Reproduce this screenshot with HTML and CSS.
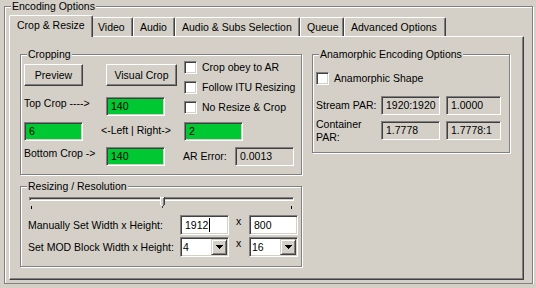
FILE: index.html
```html
<!DOCTYPE html>
<html lang="en">
<head>
    <meta charset="UTF-8">
    <title>Encoding Options</title>
    <link rel="stylesheet" href="styles.css">
</head>
<body>

    <div class="group outer">
        <span class="group-title">Encoding Options</span>

        <div class="tabs">
            <div class="tab tab-active">Crop &amp; Resize</div>
            <div class="tab tab-video">Video</div>
            <div class="tab tab-audio">Audio</div>
            <div class="tab tab-subs">Audio &amp; Subs Selection</div>
            <div class="tab tab-queue">Queue</div>
            <div class="tab tab-advanced">Advanced Options</div>
        </div>

        <div class="tab-panel">

            <div class="group cropping">
                <span class="group-title">Cropping</span>
                <div class="crop-grid">
                    <button class="btn btn-preview">Preview</button>
                    <button class="btn btn-visual">Visual Crop</button>
                    <div class="check-list">
                        <label class="check"><span class="check-box"></span>Crop obey to AR</label>
                        <label class="check"><span class="check-box"></span>Follow ITU Resizing</label>
                        <label class="check"><span class="check-box"></span>No Resize &amp; Crop</label>
                    </div>

                    <span class="label">Top Crop ----&gt;</span>
                    <span class="field field-green">140</span>

                    <span class="field field-green">6</span>
                    <span class="label label-mid">&lt;-Left | Right-&gt;</span>
                    <span class="field field-green">2</span>

                    <span class="label">Bottom Crop -&gt;</span>
                    <span class="field field-green">140</span>
                    <div class="ar-error">
                        <span class="label">AR Error:</span>
                        <span class="field ar-field">0.0013</span>
                    </div>
                </div>
            </div>

            <div class="group anamorphic">
                <span class="group-title">Anamorphic Encoding Options</span>
                <label class="check"><span class="check-box"></span>Anamorphic Shape</label>
                <div class="par-grid">
                    <span class="label">Stream PAR:</span>
                    <span class="field field-par">1920:1920</span>
                    <span class="field field-par-narrow">1.0000</span>
                    <span class="label">Container<br>PAR:</span>
                    <span class="field field-par">1.7778</span>
                    <span class="field field-par-narrow">1.7778:1</span>
                </div>
            </div>

            <div class="group resizing">
                <span class="group-title">Resizing / Resolution</span>
                <div class="slider">
                    <div class="slider-track"></div>
                    <svg class="slider-thumb" style="left: 50%" width="5" height="11" viewBox="0 0 5 11">
                        <rect x="0" y="0" width="5" height="8" fill="#d4d0c8"/>
                        <rect x="0" y="0" width="1" height="8" fill="#fff"/>
                        <rect x="0" y="0" width="4" height="1" fill="#fff"/>
                        <rect x="3" y="1" width="1" height="8" fill="#808080"/>
                        <rect x="4" y="0" width="1" height="8" fill="#404040"/>
                        <rect x="1" y="8" width="1" height="1" fill="#fff"/>
                        <rect x="2" y="8" width="1" height="1" fill="#d4d0c8"/>
                        <rect x="3" y="8" width="1" height="1" fill="#404040"/>
                        <rect x="2" y="9" width="1" height="2" fill="#404040"/>
                    </svg>
                    <div class="slider-ticks"><i></i><i></i></div>
                </div>

                <div class="size-grid">
                    <span class="label">Manually Set Width x Height:</span>
                    <span class="field field-white">1912<span class="caret"></span></span>
                    <span class="times">x</span>
                    <span class="field field-white">800</span>

                    <span class="label">Set MOD Block Width x Height:</span>
                    <div class="combo">
                        <span>4</span>
                        <span class="combo-btn"><svg width="7" height="4" viewBox="0 0 7 4"><path d="M0 0H7V1H6V2H5V3H4V4H3V3H2V2H1V1H0Z"/></svg></span>
                    </div>
                    <span class="times">x</span>
                    <div class="combo">
                        <span>16</span>
                        <span class="combo-btn"><svg width="7" height="4" viewBox="0 0 7 4"><path d="M0 0H7V1H6V2H5V3H4V4H3V3H2V2H1V1H0Z"/></svg></span>
                    </div>
                </div>
            </div>

        </div>
    </div>

</body>
</html>
```

FILE: styles.css
```css
body {
    margin: 0;
    background-color: #d4d0c8;
    font-family: "Liberation Sans", Arial, sans-serif;
    font-size: 10.5px;
    line-height: 13px;
    color: #000;
}

/* etched group box */
.group {
    position: relative;
    box-sizing: border-box;
    border: 1px solid #808080;
    box-shadow: inset 1px 1px 0 #fff, 1px 1px 0 #fff;
}

.group-title {
    position: absolute;
    top: -7px;
    left: 6px;
    padding: 0 1px;
    background-color: #d4d0c8;
    white-space: nowrap;
}

.outer {
    width: 529px;
    height: 278px;
    margin: 6px 0 0 4px;
    padding: 8px 0 0 4px;
}

/* tabs */
.tabs {
    display: flex;
    align-items: flex-end;
    height: 21px;
    margin-left: 2px;
}

.tab {
    box-sizing: border-box;
    height: 19px;
    padding: 3px 0 0 6px;
    border: 1px solid;
    border-color: #fff #404040 transparent #fff;
    border-bottom: 0;
    border-radius: 2px 2px 0 0;
    box-shadow: inset -1px 0 0 #808080;
    white-space: nowrap;
}

.tab-active {
    position: relative;
    z-index: 1;
    width: 84px;
    height: 22px;
    margin: 0 -2px -1px;
    padding-left: 7px;
    background-color: #d4d0c8;
}

.tab-video { width: 42px; }
.tab-audio { width: 42px; }
.tab-subs { width: 125px; }
.tab-queue { width: 44px; }
.tab-advanced { width: 102px; }

.tab-panel {
    box-sizing: border-box;
    display: grid;
    grid-template-columns: 282px 198px;
    grid-template-rows: 121px 81px;
    column-gap: 10px;
    row-gap: 11px;
    align-items: start;
    width: 515px;
    height: 244px;
    padding: 17px 0 0 10px;
    border: 1px solid;
    border-color: #fff #404040 #404040 #fff;
    box-shadow: inset -1px -1px 0 #808080;
}

/* cropping */
.cropping {
    height: 121px;
    padding: 9px 0 0 3px;
}

.crop-grid {
    display: grid;
    grid-template-columns: 82px 78px 1fr;
    grid-template-rows: 33px 25px 25px 19px;
    align-items: start;
}

.btn {
    box-sizing: border-box;
    height: 22px;
    padding: 0;
    font: inherit;
    color: #000;
    background-color: #d4d0c8;
    border: 1px solid;
    border-color: #fff #404040 #404040 #fff;
    box-shadow: inset -1px -1px 0 #808080;
}

.btn-preview { width: 59px; }
.btn-visual { width: 71px; }

.check-list {
    grid-row: span 2;
    display: flex;
    flex-direction: column;
    gap: 7px;
    margin-top: -3px;
}

.check {
    display: flex;
    align-items: center;
    gap: 5px;
    height: 13px;
    white-space: nowrap;
}

.check-box {
    box-sizing: border-box;
    width: 13px;
    height: 13px;
    flex: none;
    background-color: #fff;
    border: 1px solid;
    border-color: #808080 #fff #fff #808080;
    box-shadow: inset 1px 1px 0 #404040, inset -1px -1px 0 #d4d0c8;
}

.label {
    white-space: nowrap;
}

.label-mid {
    margin: 2px 0 0 -5px;
}

.field {
    box-sizing: border-box;
    display: block;
    height: 19px;
    line-height: 17px;
    padding-left: 4px;
    background-color: #d4d0c8;
    border: 1px solid;
    border-color: #808080 #fff #fff #808080;
    box-shadow: inset 1px 1px 0 #404040, inset -1px -1px 0 #d4d0c8;
    white-space: nowrap;
    overflow: hidden;
}

.field-green {
    width: 59px;
    background-color: #00c832;
}

.ar-error {
    display: flex;
    align-items: center;
    justify-content: space-between;
    width: 111px;
    height: 19px;
    margin-left: -1px;
}

.ar-field {
    width: 59px;
}

/* anamorphic */
.anamorphic {
    height: 99px;
    padding: 17px 0 0 3px;
}

.par-grid {
    display: grid;
    grid-template-columns: 65px 65px 55px;
    grid-template-rows: 19px 19px;
    row-gap: 6px;
    align-items: center;
    margin-top: 11px;
}

.field-par { width: 59px; }
.field-par-narrow { width: 55px; }

/* resizing */
.resizing {
    height: 81px;
    padding-left: 3px;
}

.slider {
    position: relative;
    width: 265px;
    margin: 10px 0 0 5px;
}

.slider-track {
    box-sizing: border-box;
    height: 4px;
    margin-top: 4px;
    border: 1px solid;
    border-color: #808080 #fff #fff #808080;
    box-shadow: inset 1px 1px 0 #404040;
}

.slider-thumb {
    position: absolute;
    top: 0;
    margin-left: -2px;
}

.slider-ticks {
    display: flex;
    justify-content: space-between;
    height: 3px;
    margin-top: 5px;
    padding: 0 2px;
}

.slider-ticks i {
    width: 1px;
    background-color: #000;
}

.size-grid {
    display: grid;
    grid-template-columns: 152px 49px 20px 49px;
    grid-template-rows: 20px 20px;
    row-gap: 2px;
    align-items: center;
    margin: 6px 0 0 4px;
}

.field-white {
    height: 20px;
    line-height: 18px;
    background-color: #fff;
}

.caret {
    display: inline-block;
    width: 1px;
    height: 14px;
    margin-left: 1px;
    vertical-align: -3px;
    background-color: #000;
}

.times {
    align-self: start;
    padding-left: 7px;
}

.combo {
    box-sizing: border-box;
    display: flex;
    justify-content: space-between;
    height: 20px;
    line-height: 18px;
    padding-left: 2px;
    background-color: #fff;
    border: 1px solid;
    border-color: #808080 #fff #fff #808080;
    box-shadow: inset 1px 1px 0 #404040, inset -1px -1px 0 #d4d0c8;
}

.combo-btn {
    box-sizing: border-box;
    display: flex;
    align-items: center;
    justify-content: center;
    width: 16px;
    height: 16px;
    margin: 1px;
    background-color: #d4d0c8;
    border: 1px solid;
    border-color: #d4d0c8 #404040 #404040 #d4d0c8;
    box-shadow: inset 1px 1px 0 #fff, inset -1px -1px 0 #808080;
}
```
